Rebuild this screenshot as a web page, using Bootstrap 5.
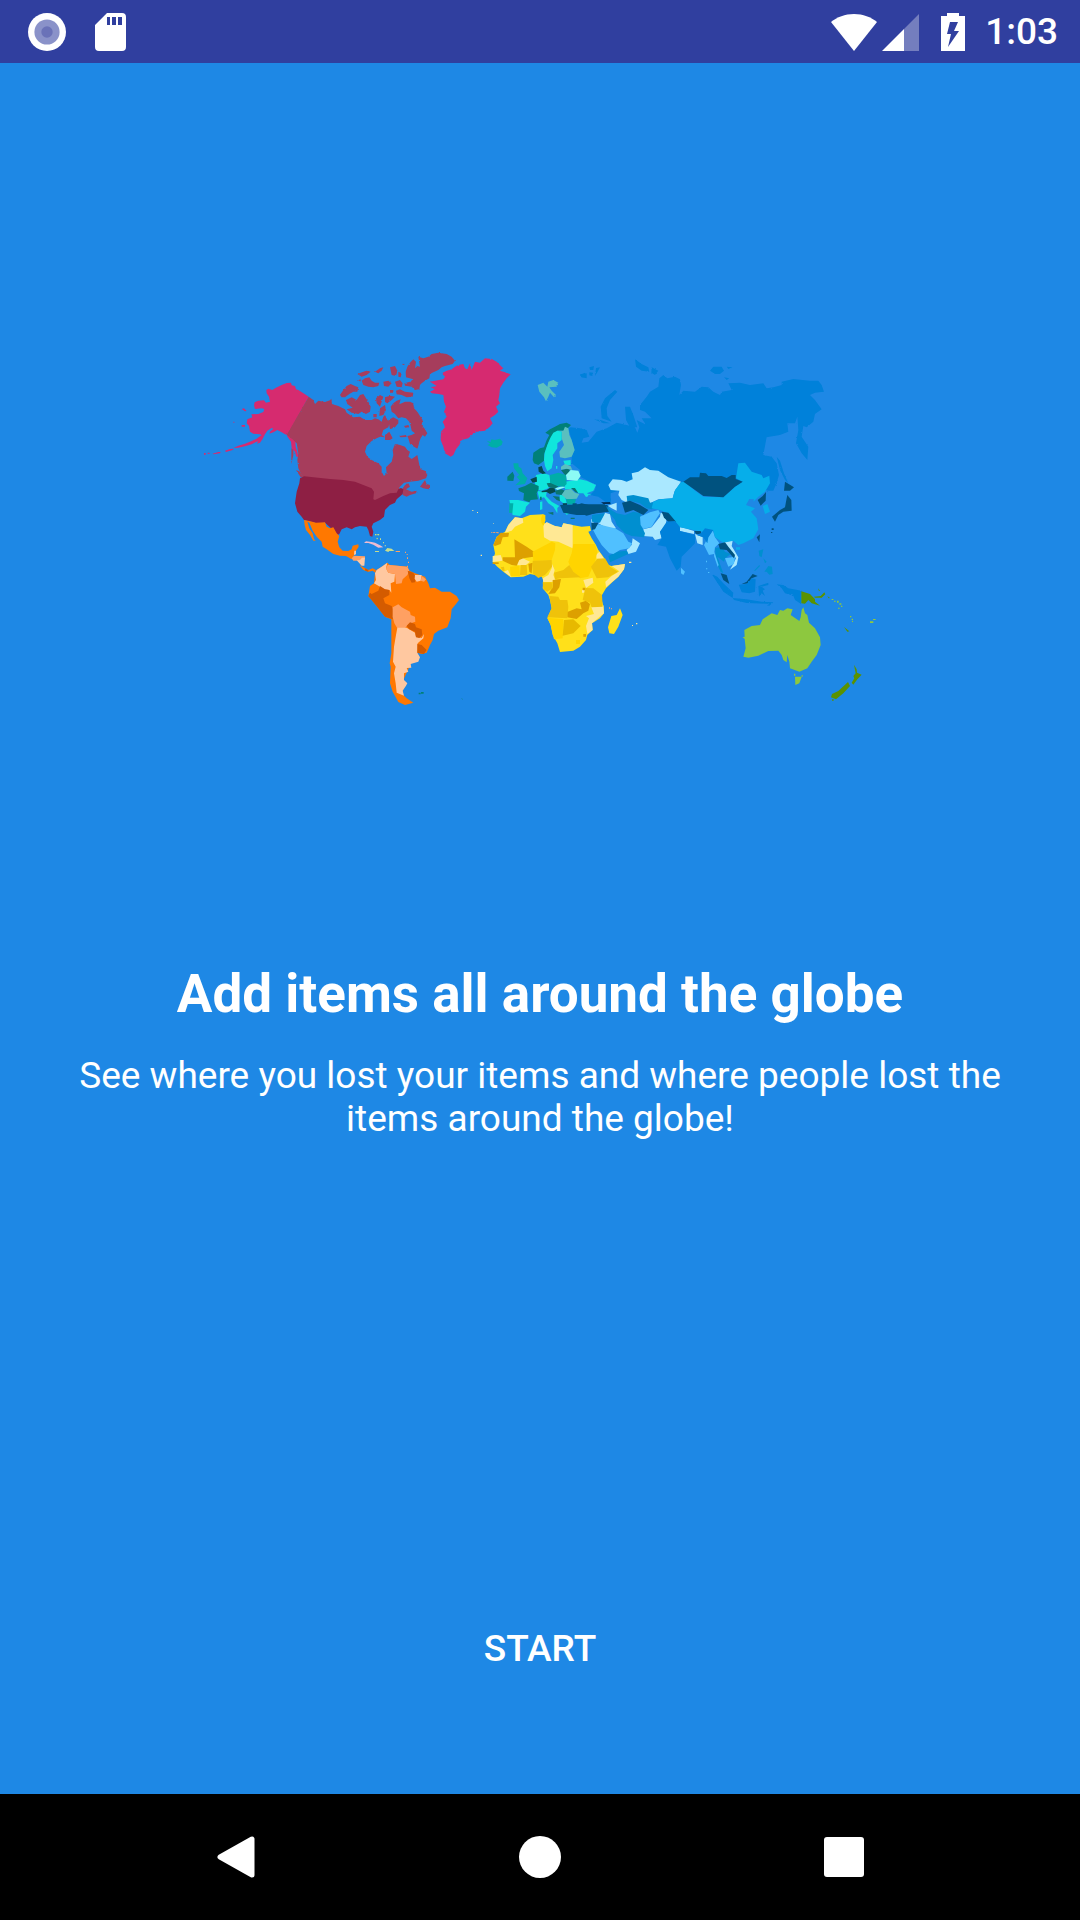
<!DOCTYPE html>
<html lang="en">
<head>
<meta charset="utf-8">
<meta name="viewport" content="width=device-width, initial-scale=1">
<title>Add items all around the globe</title>
<link href="https://cdn.jsdelivr.net/npm/bootstrap@5.3.0/dist/css/bootstrap.min.css" rel="stylesheet">
<style>
body{font-family:Roboto,"Noto Sans",sans-serif;background:#1e88e5}
.status-strip{height:63px;background:#303f9f;padding:0 22px 0 28px}
.status-strip svg,.key-bar svg{display:block;flex:none}
.clock{font-size:37px;line-height:43px;font-weight:500;margin-left:20px}
.intro{padding:277px 72px 124px}
.world{width:700px;max-width:100%;height:auto}
.headline{font-size:53px;line-height:62px;font-weight:700;margin:243px 0 29px}
.blurb{font-size:37px;line-height:43px}
.start-btn{font-size:37px;line-height:43px;font-weight:500}
.key-bar{height:126px;background:#000}
.key-bar .btn{width:304px;max-width:33%}
.gr-l{gap:29px}
.sig{margin:0 22px 0 5px}
/* map palette */
.pk{fill:#d62b6f}.ca{fill:#a63e5b}.us{fill:#8e1f44}
.or{fill:#ff7800}.o2{fill:#d45b00}.o3{fill:#ffa062}.o4{fill:#ffc8a0}
.t1{fill:#10e5dc}.t2{fill:#00aea8}.t3{fill:#008078}.t4{fill:#5abfbf}.t5{fill:#054a4c}.t6{fill:#8cfaf5}
.y1{fill:#ffe01a}.y2{fill:#ffd400}.y3{fill:#efc20a}.y4{fill:#dda000}.y5{fill:#ffe894}
.ru{fill:#0081da}.b1{fill:#aae8ff}.b2{fill:#50c0ff}.b3{fill:#008fd0}.b4{fill:#00527f}.cn{fill:#06aeea}
.g1{fill:#8dc83f}.g2{fill:#5a9200}.sea{fill:#1e88e5}
</style>
</head>
<body class="d-flex flex-column min-vh-100 text-white">
<header class="status-strip d-flex align-items-center justify-content-between">
  <div class="gr-l d-flex align-items-center">
    <svg width="38" height="38" viewBox="0 0 38 38" aria-hidden="true"><circle cx="19" cy="19" r="19" fill="#fff"/><circle cx="19" cy="19" r="12.6" fill="#8a92c9"/><circle cx="19" cy="19" r="5.7" fill="#6a72b8"/></svg>
    <svg width="31" height="38" viewBox="0 0 31 38" aria-hidden="true"><path fill="#fff" fill-rule="evenodd" d="M12 0H27Q31 0 31 4V34Q31 38 27 38H4Q0 38 0 34V12ZM12 4V12H15V4ZM17 4V12H21V4ZM23 4V12H27V4Z"/></svg>
  </div>
  <div class="d-flex align-items-center">
    <svg width="46" height="38" viewBox="0 0 46 38" aria-hidden="true"><path fill="#fff" d="M23 38 0 9C6 4 14 1 23 1S40 4 46 9Z"/></svg>
    <svg class="sig" width="37" height="38" viewBox="0 0 37 38" aria-hidden="true"><path fill="#fff" fill-opacity=".33" d="M22 16 37 1V38H22Z"/><path fill="#fff" d="M0 38 22 16V38Z"/></svg>
    <svg width="24" height="38" viewBox="0 0 24 38" aria-hidden="true"><path fill="#fff" fill-rule="evenodd" d="M6 0H18V3H24V38H0V3H6ZM9 9 6 21H10L7 34 18 18H13L17 9Z"/></svg>
    <span class="clock">1:03</span>
  </div>
</header>
<main class="intro flex-grow-1 d-flex flex-column align-items-center text-center">
<svg class="world" viewBox="190 340 700 380" role="img" aria-label="World map">
<defs><filter id="coast" x="-5%" y="-5%" width="110%" height="110%"><feTurbulence type="fractalNoise" baseFrequency=".25" numOctaves="2" seed="4"/><feDisplacementMap in="SourceGraphic" scale="6" xChannelSelector="R" yChannelSelector="G"/></filter></defs>
<!-- Alaska -->
<g transform="translate(190 340) scale(.33333)" class="pk">
<path d="M356 170 345 163 325 150 318 148 315 138 305 136 303 128 290 129 275 135 258 143 247 150 235 146 229 150 230 160 237 170 240 185 228 188 222 181 205 182 194 187 192 196 195 207 215 205 223 207 220 216 205 222 184 223 187 232 172 238 170 250 177 258 180 275 190 281 210 283 215 285 200 296 185 303 165 311 145 317 130 324 145 323 165 319 185 313 198 306 205 304 200 311 210 308 218 296 225 283 232 272 245 264 250 266 240 275 238 281 250 277 262 270 275 277 285 283 292 285 300 290 310 298 316 300 317 320 322 335 325 350 319 350 315 335 305 325 303 305 291 288ZM105 332 120 327 130 326 130 329 108 336ZM68 341 85 336 92 336 90 340 70 343ZM42 339h5v5h-5ZM53 338h6v3h-6ZM155 207 162 205 170 213 165 214ZM155 255h10v5h-10ZM130 245h3v3h-3Z"/>
</g>
<!-- Canada, USA, Greenland -->
<g transform="translate(330 340) scale(.33333)">
<g class="ca" filter="url(#coast)">
<path d="M-64 170-50 180-45 192-35 182-15 186 0 181 4 176 6 192 25 198 45 208 50 218 70 232 90 230 105 240 125 240 135 235 145 238 155 245 160 230 165 225 172 240 180 245 175 262 160 270 155 285 165 292 150 290 140 295 125 303 110 318 105 335 112 350 125 360 145 370 155 380 155 395 162 408 170 400 168 382 185 365 190 345 188 330 195 312 210 315 225 320 232 330 240 335 235 350 245 357 258 348 262 345 268 375 272 388 285 392 292 405 288 415 265 422 240 425 222 428 210 440 203 460 180 464 160 472 135 485 100 470 60 440 0 425-78 415-85 405-95 385-98 360-95 340-100 310-110 300-122 290-130 285Z"/>
<path d="M218 445 225 435 235 430 240 440 228 448 245 455 260 452 258 460 240 465 230 470 218 465ZM270 440 278 430 285 420 290 432 300 435 300 448 290 447 280 445ZM-116 325-110 330-110 345-116 372ZM-102 390-90 395-80 412-88 412Z"/>
<path d="M265 50 280 55 295 50 305 42 325 38 350 42 365 50 375 62 368 72 345 78 335 82 325 90 310 97 300 102 298 115 285 122 275 130 270 135 268 148 255 150 245 140 225 137 223 130 240 125 250 118 228 112 227 95 232 80 240 68 250 58 258 65 255 85 262 78 270 80 268 68Z"/>
<path d="M198 152 210 148 225 155 250 158 248 170 230 172 215 165 200 163ZM182 200 190 190 200 182 212 178 208 193 215 190 225 185 240 185 250 190 252 205 262 215 270 228 278 240 275 255 285 268 292 280 285 290 278 285 272 295 268 305 265 318 262 326 252 320 240 312 235 295 232 288 245 285 255 280 245 272 242 258 238 245 228 235 215 232 205 235 195 222 185 215Z"/>
<path d="M48 180 65 172 80 180 90 165 100 162 108 175 115 185 122 200 120 215 108 222 95 215 85 222 65 218 50 208 68 203 52 192ZM30 165 40 150 50 138 62 132 75 138 85 142 82 155 70 155 58 162 45 172 35 172ZM95 122 105 115 118 112 125 122 135 128 148 128 145 138 130 142 115 140 100 135ZM82 102 100 95 110 92 122 95 110 105 95 110ZM135 95 150 85 160 82 155 92 145 100ZM138 175 150 165 160 170 155 185 150 200 140 190ZM165 172 180 167 195 170 185 180 172 190 165 185ZM160 125 175 122 185 130 175 140 162 138ZM150 205 165 195 168 210 160 225 148 228ZM180 82 195 78 202 92 198 108 185 105ZM205 95 215 100 212 112 205 110ZM195 125 210 120 218 130 215 142 200 140ZM175 240 190 232 205 240 205 250 195 262 180 268ZM165 285 178 275 188 295 180 300 165 300ZM208 288 228 285 230 291 212 292ZM222 258 235 255 238 262 226 263ZM180 150h10v8h-10ZM130 222h10v10h-10ZM80 122l12-4v6ZM215 72l8-1v5Z"/>
</g>
<path class="pk" filter="url(#coast)" d="M300 125 315 122 340 118 345 110 335 100 350 92 365 88 375 80 385 75 400 72 405 85 412 88 420 70 425 90 435 65 450 68 465 55 485 57 500 65 515 80 520 85 510 92 525 97 542 103 530 115 520 128 510 145 508 165 505 180 510 190 498 200 505 215 495 225 480 235 488 250 478 262 465 272 440 275 425 285 415 295 395 300 388 315 378 328 370 345 362 350 345 340 340 320 332 300 333 275 345 262 338 245 350 230 342 215 348 200 342 185 340 165 325 162 305 160 300 155 315 148 302 142 320 138Z"/>
<path class="us" d="M-78 409 0 417 40 420 75 425 100 435 125 445 132 455 130 478 135 480 160 468 180 460 200 458 205 448 213 444 220 448 218 462 200 478 195 488 180 495 165 510 162 530 150 540 130 550 125 560 130 575 127 590 120 588 115 570 110 560 90 558 75 562 65 568 50 562 35 568 28 582 22 585 10 570 0 562-15 548-40 550-78 540-85 530-98 515-105 490-100 455-92 430-90 415Z"/>
<path class="y5" d="M427 510h3v3h-3ZM441 516h3v3h-3ZM490 549h2v2h-2Z"/><path class="g1" d="M136 583h4v3h-4ZM144 582h4v4h-4ZM140 593h3v3h-3Z"/><path class="o3" d="M484 576h3v3h-3ZM491 577h5v2h-5ZM502 577h4v3h-4Z"/>
</g>
<!-- Mexico -->
<g transform="translate(190 340) scale(.33333)"><path class="or" d="M342 540 358 543 378 548 405 547 410 560 420 565 430 562 440 580 448 588 443 605 448 622 458 632 475 633 485 628 488 617 505 613 506 620 498 632 490 650 485 658 468 648 450 647 430 642 410 628 398 620 395 605 380 590 368 572 358 548 352 545 358 565 368 580 372 597 377 602 370 602 360 585 348 570 344 555Z"/></g>
<!-- Central and South America -->
<g transform="translate(350 520) scale(.33333)">
<path class="o3" d="M5 115 12 107 45 109 45 115 30 122 10 122Z"/><path class="o4" d="M20 121 30 120 36 113 45 113 43 137 35 137ZM13 92 18 92 18 103 12 105Z"/><path class="or" d="M28 135 40 142 55 150 68 145 78 150 76 158 68 152 55 155 40 150Z"/><path class="o2" d="M44 144 55 150 55 155 46 152Z"/>
<path fill="#f0bcd0" d="M42 69 48 64 65 66 75 68 90 76 100 82 85 83 70 74 55 69Z"/><path fill="#c4dc90" d="M105 92 112 84 125 86 133 93 118 93 115 96ZM75 42h4v4h-4ZM82 42h5v4h-5ZM80 54h3v4h-3ZM90 55h3v5h-3ZM99 66h3v4h-3ZM104 76h4v3h-4ZM75 93h12v3h-12Z"/><path class="o3" d="M137 93h13v3h-13ZM165 95h3v4h-3ZM170 102h3v3h-3ZM171 112h3v5h-3ZM174 125h3v4h-3ZM171 137h3v4h-3Z"/>
<path class="or" d="M75 160 80 150 95 140 112 128 120 135 150 138 172 140 178 152 195 160 225 170 235 190 240 205 255 203 275 215 300 215 320 228 327 240 318 252 305 268 302 295 292 322 265 332 252 342 248 360 240 375 230 398 215 402 202 398 182 432 160 480 158 512 160 525 170 535 190 548 165 555 145 546 128 515 120 490 122 440 119 430 124 400 124 298 105 290 85 265 65 240 55 228 60 198 72 190Z"/>
<path class="o4" d="M75 160 80 150 95 140 112 128 108 145 115 158 135 162 133 185 122 190 124 218 118 210 100 208 90 200 72 190 78 180Z"/>
<path class="o3" d="M108 145 113 135 120 135 150 138 172 140 178 152 172 165 158 178 155 190 138 192 135 162 115 158Z"/>
<path class="o2" d="M173 152 190 158 197 170 195 187 185 188 178 175ZM65 222 85 212 90 198 105 208 118 210 118 225 100 235 105 250 125 258 130 270 128 298 105 290 85 265 65 240 55 228 60 218Z"/><path class="o4" d="M195 165 215 165 212 182 200 185 194 176Z"/><path class="o3" d="M215 168 228 178 222 185 212 182Z"/>
<path class="o3" d="M128 262 145 253 155 262 180 275 182 285 195 290 196 305 175 312 165 325 142 325 133 310 128 290Z"/>
<path class="o4" d="M142 323 170 323 195 338 198 350 215 354 222 342 220 355 203 370 202 398 210 412 205 425 182 432 184 443 170 444 175 455 162 460 162 480 172 490 168 497 158 512 162 527 140 518 137 490 132 460 137 440 129 425 132 380 138 345Z"/>
<path class="o2" d="M170 318 180 307 195 312 198 322 215 328 217 345 208 354 198 352 195 335 178 328ZM202 372 215 375 230 390 222 402 202 398Z"/>
<path class="t3" d="M206 518h6v5h-6ZM213 516h8v5h-8ZM333 534l5 3v2Z"/>
</g>
<!-- Russia -->
<g transform="translate(580 340) scale(.33333)" class="ru" filter="url(#coast)">
<path d="M-28 262 0 265 20 270 28 290 10 295 5 308 25 305 50 275 80 265 110 248 140 255 165 262 172 278 178 262 170 240 190 250 198 255 185 235 215 235 195 215 180 210 180 195 200 170 210 155 235 140 238 115 250 105 262 115 285 110 300 118 303 135 298 165 310 152 345 155 365 140 385 142 400 155 420 165 425 155 455 150 445 130 480 128 510 135 550 130 560 145 580 142 605 135 605 125 640 117 690 122 715 122 725 135 732 155 705 158 690 165 705 180 725 208 705 222 700 245 680 262 670 258 665 290 685 320 682 360 665 340 648 310 655 270 652 230 645 250 622 250 625 275 600 285 560 292 550 345 575 350 590 370 597 405 590 430 580 452 566 452 500 440 300 430 240 400 130 470 95 460 92 490 60 485 30 465 45 450 48 435 20 420 0 410 0 390-25 370-25 350-17 330-25 300-35 265Z"/>
<path d="M65 235 62 200 75 175 105 150 112 155 90 180 80 205 82 228 95 245ZM135 200 150 200 160 225 172 262 150 262 138 240ZM165 58 185 72 205 82 208 95 185 92 168 80ZM215 82 235 92 225 105 214 98ZM390 92 400 80 425 80 432 92 420 102 405 102ZM440 80 458 82 445 87ZM432 112 448 115 440 120ZM590 350 600 362 612 400 625 430 615 420 600 390ZM0 105 15 98 18 112 5 112ZM28 82 42 78 40 90 30 90ZM48 84 60 82 52 97 45 108ZM28 97 40 98 35 108 28 106ZM42 238 62 240 90 250 70 250Z"/>
</g>
<!-- Europe -->
<g transform="translate(470 360) scale(.33333)">
<path class="t4" filter="url(#coast)" d="M203 75 220 68 232 80 235 65 250 60 265 68 260 80 238 82 245 92 258 105 252 112 240 98 235 110 228 124 222 112 208 95Z"/>
<path class="t2" d="M50 242 62 246 64 238 75 240 90 236 98 245 95 255 80 263 65 262 52 255 60 251Z"/>
<path class="t3" d="M188 300 190 278 210 265 222 262 230 240 238 225 226 218 240 208 255 200 270 192 290 188 303 195 295 203 280 212 262 212 250 222 238 240 230 262 222 285 222 302 205 315 192 310Z"/>
<path class="t4" d="M262 212 280 212 285 200 295 205 298 225 305 240 314 270 305 290 285 295 270 292 268 275 282 255 275 235 275 215Z"/>
<path class="t1" d="M250 218 262 212 275 215 275 240 262 250 262 265 248 285 250 300 245 325 232 334 225 318 222 300 224 278 232 255 242 232ZM258 318h4v8h-4ZM280 302 302 300 302 315 285 315ZM198 345 222 340 238 345 242 370 235 385 215 392 196 388 195 365ZM118 420 145 420 180 428 168 440 165 455 150 468 128 465ZM202 393 230 396 228 408 245 425 268 438 262 444 262 460 250 440 235 430 222 412 208 416ZM210 426 217 424 217 448 210 450ZM270 402 285 410 290 428 280 430 268 420ZM275 436 290 435 310 432 298 440 298 460 290 465 280 452ZM285 365 330 358 350 362 378 375 370 392 350 400 365 405 348 411 340 400 325 400 308 388 285 388Z"/>
<path class="t5" d="M205 322 215 318 220 332 228 340 218 342 206 335ZM181 358 200 350 201 365 188 368ZM215 393 230 390 240 383 252 382 257 395 240 402 230 396 215 397ZM278 430 292 430 290 437 280 440Z"/>
<path fill="#0a7570" d="M273 330 298 325 300 341 285 346ZM230 370 245 368 266 378 256 386 235 380ZM255 392 275 388 285 392 275 405 258 403ZM248 408 268 410 270 424 260 420ZM303 384 315 384 325 400 316 396ZM233 458 250 456 250 465ZM302 473h12v4h-12Z"/>
<path class="t4" d="M273 320 285 312 302 318 307 330 290 326 273 329ZM285 390 303 387 315 398 328 402 320 416 290 418 275 404Z"/>
<path class="t6" d="M288 345 302 330 325 332 332 348 322 362 290 360ZM255 385 280 378 286 382 262 390Z"/>
<path class="t2" d="M240 345 265 338 288 345 290 372 282 380 262 378 240 368ZM130 310 145 310 146 320 154 325 158 340 172 355 165 372 136 376 150 362 140 350 148 345 132 325ZM118 430 130 430 127 460 117 458ZM288 417 318 418 314 432 292 432Z"/>
<path class="t3" d="M145 385 165 378 183 368 206 378 206 388 200 400 204 418 182 420 178 427 160 420 162 400 147 393ZM112 350 128 335 133 347 130 363 112 362ZM210 410h5v10h-5Z"/>
<path class="b4" d="M312 437 335 430 365 437 412 435 418 455 380 458 350 467 330 460 315 458ZM308 430 320 430 320 437 308 437Z"/>
<path class="ru" d="M330 43 350 40 350 55 335 52Z"/>
</g>
<!-- Africa -->
<g transform="translate(480 500) scale(.33333)">
<path class="y1" d="M105 52 125 55 150 45 190 43 196 60 192 68 225 78 245 82 250 70 277 75 305 80 330 78 333 92 325 95 335 115 348 135 355 150 370 170 385 195 395 198 435 192 432 208 415 230 395 248 378 265 366 285 365 300 371 320 372 340 360 355 336 370 338 390 322 405 318 420 300 440 280 452 240 456 232 430 218 405 212 375 202 355 215 325 210 300 205 285 188 265 190 240 185 230 165 225 150 222 130 230 92 232 70 215 52 200 38 185 45 160 40 135 50 110 75 95 85 75ZM420 325 428 345 415 380 402 402 388 400 384 382 394 348 410 345Z"/>
<path class="y5" d="M105 52 128 55 130 68 105 80 95 92 75 98 85 75ZM190 75 200 66 225 78 245 82 250 70 278 75 278 145 235 125 210 122 192 112ZM215 190 224 210 220 225 228 245 190 247 188 235 205 225 215 205ZM395 198 435 192 432 208 415 230 378 262 376 245 395 228 418 214ZM334 322 370 316 372 340 336 370 338 390 322 402 318 378 327 355 318 348 342 342ZM310 240 338 233 340 248 318 264ZM112 185 125 173 150 185 135 197 112 195ZM38 168 62 165 68 182 38 186ZM72 215 84 210 94 232ZM348 165 358 155 387 197 372 178 350 176ZM306 270h8v8h-8ZM447 185h7v4h-7Z"/>
<path class="y4" d="M40 135 50 112 62 98 87 99 85 110 68 112 62 132 45 138ZM103 118 140 140 162 155 160 170 130 175 118 180 110 197 95 195 68 182 68 172 105 172ZM218 240 243 237 238 262 225 280 205 282 218 262ZM260 337 290 325 305 328 300 308 318 302 330 312 325 332 310 340 290 357 262 352ZM145 192 158 188 155 220 148 215ZM38 187h18v5h-18ZM308 263h8v8h-8ZM310 402h8v8h-8Z"/>
<path class="y2" d="M183 55 188 43 196 45 196 62 190 78 184 68ZM158 155 215 125 226 130 225 150 215 180 160 182ZM280 132 345 132 352 155 345 185 325 230 300 235 275 210 265 185 275 160ZM90 200 118 197 120 228 92 228ZM202 353 250 357 248 415 222 418 212 375ZM288 420h12v12h-12Z"/>
<path class="y3" d="M158 182 215 180 216 200 195 225 175 234 158 220ZM222 218 250 210 268 195 280 215 302 232 240 235 225 238ZM333 200 352 176 375 175 390 200 414 215 385 232 350 235ZM188 247 215 247 218 265 202 275 190 268ZM208 288 235 290 240 300 262 300 265 320 262 355 202 352 215 325ZM316 264 340 265 366 285 368 320 335 322 330 308 308 300ZM122 195 140 195 142 225 120 225ZM62 202 72 200 74 212 68 213Z"/>
<path fill="#e7b900" d="M252 360 280 358 302 378 280 400 248 407Z"/>
<path class="o3" d="M40 96h4v3h-4ZM48 97h6v2h-6ZM387 322h3v4h-3ZM393 325h3v3h-3Z"/>
<path class="y5" d="M2 164h4v4h-4ZM456 375h3v3h-3ZM468 369h4v4h-4Z"/>
</g>
<!-- Asia -->
<g transform="translate(580 450) scale(.33333)">
<path class="sea" d="M92 130 115 122 125 145 133 155 138 185 118 188 108 165 92 145ZM25 134 55 140 80 158 20 160Z"/>
<path class="b1" d="M85 105 98 88 125 90 140 95 158 88 155 70 175 65 195 52 210 60 235 62 265 82 303 95 283 125 278 145 235 148 210 160 195 145 145 138 142 158 125 150 115 135 118 122 92 120ZM190 238 215 232 240 200 242 188 260 195 258 225 240 245 245 265 225 270 218 260 190 258ZM295 230 315 235 342 243 342 252 300 243ZM345 252 368 262 368 285 352 280ZM430 275 458 272 455 288 475 322 470 345 450 359 458 345 468 325 445 295ZM140 300 155 285 158 265 180 280 168 305 145 312ZM55 220 75 188 90 193 95 215 108 235 90 240ZM84 167 110 158 110 182 95 175ZM34 208h7v10h-7Z"/>
<path class="b3" d="M140 138 160 135 205 145 210 158 235 155 240 165 215 178 200 175 180 160 150 152 142 155ZM78 168 90 178 110 190 135 195 160 185 182 190 182 225 195 250 192 262 155 258 135 250 110 225 105 210 90 192ZM36 195 75 190 60 218 36 215ZM85 318 110 305 140 302 145 312 90 337ZM405 295 425 290 435 305 452 312 435 325 432 335 412 320 430 370 422 365 408 335ZM536 302 550 298 545 322 538 318ZM550 325 560 335 555 340ZM565 348 576 350 578 372 568 374 560 365 553 365ZM522 362 538 345 540 348 526 362Z"/>
<path class="b2" d="M55 223 85 230 105 235 130 250 145 275 156 280 148 295 120 300 100 312 88 310 65 285 50 260 38 238ZM180 200 210 187 235 180 240 190 230 205 215 230 190 237 182 225ZM383 265 398 240 405 262 418 280 405 292 402 312 387 315 372 285ZM403 305 416 345 413 350 402 318ZM435 325 465 320 462 342 445 350ZM303 353 315 365 310 375 303 370ZM378 332h3v5h-3ZM378 355h4v3h-4ZM384 366h4v3h-4Z"/>
<path class="cn" d="M215 175 220 155 240 148 278 145 285 120 303 97 315 95 345 122 370 140 430 142 465 110 488 95 468 85 475 40 495 38 515 65 545 75 550 85 568 77 570 100 555 125 535 140 520 155 522 148 508 147 498 165 525 175 513 185 530 205 535 238 520 265 490 280 475 285 460 272 430 278 405 262 400 242 365 245 340 240 300 232 285 215 260 188 240 180ZM468 292h12v7h-12ZM548 168 562 162 570 185 555 192Z"/>
<path class="b4" d="M310 95 330 82 358 82 360 68 378 70 385 78 425 78 440 84 455 75 467 75 467 87 488 95 465 110 430 142 370 138 345 120ZM126 158 150 152 180 165 205 180 190 195 160 180 135 188ZM-60 165-10 163 30 163 75 163 82 185 50 190 15 195-10 195-50 188ZM245 185 265 188 288 215 265 215 252 203ZM343 243 362 243 364 252 348 252ZM34 218 55 218 45 238 35 240ZM415 282 435 277 445 290 465 315 462 325 440 300 420 298ZM422 370 440 375 448 402 430 390ZM484 403 500 395 518 372 533 378 515 385 505 400ZM533 150 548 138 558 126 557 152 542 167ZM530 262 540 253 538 277ZM615 95 642 112 630 122 612 122ZM622 135 634 150 635 182 610 185 595 195 585 215 576 200 600 180 615 172 618 155ZM575 235h6v5h-6ZM573 246h4v3h-4Z"/>
<path fill="#00305a" d="M63 157 90 156 92 162 70 162Z"/>
<path class="ru" d="M260 215 285 213 300 232 300 243 345 255 345 280 335 290 305 320 302 350 290 362 270 325 258 290 232 285 245 265 240 245ZM365 248 375 235 400 240 385 262 382 280 370 262 350 255Z"/>
<path class="ru" filter="url(#coast)" d="M395 372 412 380 430 400 460 428 458 444 430 425 410 395ZM458 444 500 448 545 455 580 457 575 462 500 459 462 450ZM476 404 500 402 515 385 527 388 525 425 508 430 485 427ZM535 408 565 398 565 405 545 410 555 418 548 422 555 438 545 430 537 440ZM590 403 610 405 625 415 665 422 663 462 645 450 640 437 615 430 605 415ZM560 466 578 458 568 467Z"/>
</g>
<!-- Oceania -->
<g transform="translate(700 560) scale(.33333)">
<path class="g1" d="M133 210 155 198 180 195 188 178 215 160 232 165 240 150 250 152 262 145 278 148 272 165 298 183 302 172 305 150 310 142 315 160 322 165 327 188 345 205 360 232 362 255 350 285 335 305 322 325 298 335 270 325 268 305 262 285 260 307 250 300 245 285 235 272 205 273 175 287 145 293 130 290 137 265 134 237 128 232 134 230ZM285 350 305 350 298 370 286 375ZM282 341h4v6h-4ZM305 345h3v5h-3ZM395 117h5v3h-5ZM402 122h5v3h-5ZM411 122h5v6h-5ZM418 130h6v4h-6ZM414 143h5v3h-5ZM423 137h4v4h-4ZM450 168h4v4h-4ZM455 176h4v4h-4ZM456 182h3v4h-3ZM510 184h10v5h-10ZM519 177h8v3h-8Z"/>
<path class="g2" d="M304 94 330 102 345 118 345 125 360 137 335 130 325 120 315 131 304 130ZM342 110 362 108 373 97 376 103 365 113 345 113ZM354 85 360 92 357 94ZM382 108 390 114 386 115ZM432 201 448 214 442 215ZM462 314 470 328 471 338 485 344 472 358 460 374 455 368 463 355 460 348 467 340ZM444 366 450 378 430 400 408 418 393 412 396 402 415 393ZM396 418h5v4h-5Z"/>
</g>
</svg>
  <h1 class="headline">Add items all around the globe</h1>
  <p class="blurb mb-5">See where you lost your items and where people lost the items around the globe!</p>
  <button type="button" class="start-btn btn border-0 p-0 text-white mt-auto">START</button>
</main>
<nav class="key-bar d-flex justify-content-center align-items-stretch" aria-label="System navigation">
  <button type="button" class="btn border-0 p-0 d-flex align-items-center justify-content-center" aria-label="Back"><svg width="38" height="42" viewBox="0 0 38 42"><path d="M35 3V39L3 21Z" fill="#fff" stroke="#fff" stroke-width="5" stroke-linejoin="round"/></svg></button>
  <button type="button" class="btn border-0 p-0 d-flex align-items-center justify-content-center" aria-label="Home"><svg width="42" height="42" viewBox="0 0 42 42"><circle cx="21" cy="21" r="21" fill="#fff"/></svg></button>
  <button type="button" class="btn border-0 p-0 d-flex align-items-center justify-content-center" aria-label="Recent apps"><svg width="40" height="40" viewBox="0 0 40 40"><rect width="40" height="40" rx="3" fill="#fff"/></svg></button>
</nav>
<script src="https://cdn.jsdelivr.net/npm/bootstrap@5.3.0/dist/js/bootstrap.bundle.min.js"></script>
</body>
</html>
